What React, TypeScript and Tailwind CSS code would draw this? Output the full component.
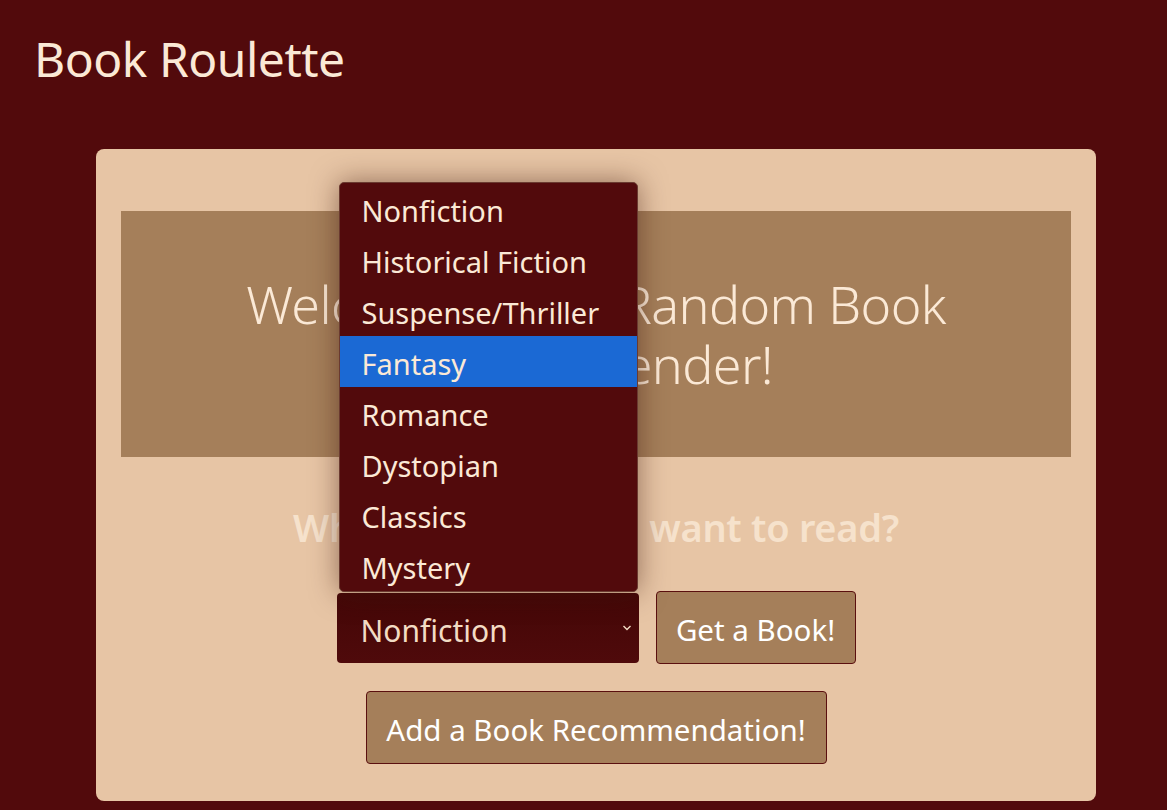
import React from "react";

const genres = [
  "Nonfiction",
  "Historical Fiction",
  "Suspense/Thriller",
  "Fantasy",
  "Romance",
  "Dystopian",
  "Classics",
  "Mystery",
];

const App = () => {
  return (
    <div className="min-h-[810px] bg-[#520a0c] font-['Noto_Sans',sans-serif] overflow-hidden">
      {/* Header */}
      <h1 className="pl-[34px] pt-[27px] h-[149px] text-[48px] leading-[64px] text-[#fbe9d6] tracking-[-0.5px]">
        Book Roulette
      </h1>

      {/* Card */}
      <div className="mx-[96px] w-[1000px] h-[652px] rounded-lg bg-[#e7c5a5] px-[25px] pt-[62px]">
        {/* Banner */}
        <div className="h-[246px] bg-[#a57f5a] flex items-center justify-center text-center">
          <p className="text-[52px] leading-[60px] font-light text-[#fbe9d6] w-[760px] tracking-[-0.6px]">
            Welcome to the Random Book Recommender!
          </p>
        </div>

        {/* Question */}
        <h2 className="mt-[48px] text-center text-[38px] leading-[44px] font-semibold text-[#f6e2cc] tracking-[-0.3px]">
          What genre do you want to read?
        </h2>

        {/* Select + button */}
        <div className="mt-[42px] flex justify-center items-center gap-[17px]">
          <div className="relative">
            <div className="w-[302px] h-[70px] rounded-[4px] bg-gradient-to-b from-[#440707] to-[#4f0a0b] flex items-center justify-between pl-[24px] pr-[6px] pt-[5px] text-[30px] text-[#f3dcc4]">
              <span>Nonfiction</span>
              <svg width="12" height="10" viewBox="0 0 12 10" className="mb-[4px]">
                <path d="M2.5 3 L6 6.5 L9.5 3" fill="none" stroke="#f3dcc4" strokeWidth="1.4" />
              </svg>
            </div>

            {/* Open dropdown */}
            <ul className="absolute left-[2px] bottom-[71px] w-[299px] rounded-[5px] bg-[#520a0c] border border-[#6a3a30] shadow-[0_0_28px_rgba(60,20,10,0.5)] overflow-hidden">
              {genres.map((g) => (
                <li
                  key={g}
                  className={`h-[51px] flex items-center pl-[22px] pt-[6px] text-[29px] text-[#fbe9d6] ${
                    g === "Fantasy" ? "bg-[#1b69d4]" : ""
                  }`}
                >
                  {g}
                </li>
              ))}
            </ul>
          </div>

          <button className="w-[200px] h-[73px] rounded-[4px] border border-[#5a0f0f] bg-[#a57f5a] pt-[5px] text-[29.5px] text-white">
            Get a Book!
          </button>
        </div>

        <div className="mt-[27px] flex justify-center">
          <button className="w-[461px] h-[73px] rounded-[4px] border border-[#5a0f0f] bg-[#a57f5a] pt-[5px] text-[29.5px] text-white">
            Add a Book Recommendation!
          </button>
        </div>
      </div>
    </div>
  );
};

export default App;
